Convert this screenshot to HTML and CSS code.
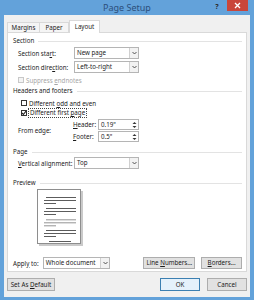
FILE: index.html
```html
<!DOCTYPE html>
<html lang="en">
<head>
  <meta charset="UTF-8" />
  <meta name="viewport" content="width=device-width, initial-scale=1.0"/>
  <title>Page Setup</title>
  <link rel="stylesheet" href="styles.css">
</head>
<body>
  <div class="window">
    <div class="titlebar">
      <span class="title">Page Setup</span>
      <div class="controls">
        <span class="help">?</span>
        <span class="close">
          <svg width="7" height="7" viewBox="0 0 7 7"><path d="M1 1L6 6M6 1L1 6" stroke="#fff" stroke-width="1.3"/></svg>
        </span>
      </div>
    </div>

    <div class="client">
      <div class="tabs">
        <div class="tab">Margins</div>
        <div class="tab">Paper</div>
        <div class="tab active">Layout</div>
      </div>

      <div class="page">
        <div class="group-title">Section</div>
        <div class="row">
          <span class="label">Section sta<u>r</u>t:</span>
          <div class="select">
            <span class="value">New page</span>
            <span class="drop"><svg width="5" height="4" viewBox="0 0 5 4"><path d="M0.5 1L2.5 3L4.5 1" fill="none" stroke="#444" stroke-width="0.9"/></svg></span>
          </div>
        </div>
        <div class="row">
          <span class="label">Section dire<u>c</u>tion:</span>
          <div class="select">
            <span class="value">Left-to-right</span>
            <span class="drop"><svg width="5" height="4" viewBox="0 0 5 4"><path d="M0.5 1L2.5 3L4.5 1" fill="none" stroke="#444" stroke-width="0.9"/></svg></span>
          </div>
        </div>
        <div class="check-row disabled indent">
          <span class="box"></span>
          <span>Suppress <u>e</u>ndnotes</span>
        </div>

        <div class="group-title hf">Headers and footers</div>
        <div class="check-row first">
          <span class="box"></span>
          <span>Different <u>o</u>dd and even</span>
        </div>
        <div class="check-row">
          <span class="box">
            <svg width="6" height="6" viewBox="0 0 6 6"><path d="M1 3L2.4 4.5L5 1.2" fill="none" stroke="#222" stroke-width="1.1"/></svg>
          </span>
          <span class="focus">Different first <u>p</u>age</span>
        </div>
        <div class="edge">
          <span class="label">From edge:</span>
          <div class="edge-fields">
            <div class="field">
              <span class="sublabel"><u>H</u>eader:</span>
              <div class="spin">
                <span class="value">0.19"</span>
                <span class="arrows"><svg width="5" height="8" viewBox="0 0 5 8"><path d="M0.5 3L2.5 1L4.5 3Z M0.5 5L2.5 7L4.5 5Z" fill="#333"/></svg></span>
              </div>
            </div>
            <div class="field">
              <span class="sublabel"><u>F</u>ooter:</span>
              <div class="spin">
                <span class="value">0.5"</span>
                <span class="arrows"><svg width="5" height="8" viewBox="0 0 5 8"><path d="M0.5 3L2.5 1L4.5 3Z M0.5 5L2.5 7L4.5 5Z" fill="#333"/></svg></span>
              </div>
            </div>
          </div>
        </div>

        <div class="group-title pg">Page</div>
        <div class="row tight">
          <span class="label"><u>V</u>ertical alignment:</span>
          <div class="select">
            <span class="value">Top</span>
            <span class="drop"><svg width="5" height="4" viewBox="0 0 5 4"><path d="M0.5 1L2.5 3L4.5 1" fill="none" stroke="#444" stroke-width="0.9"/></svg></span>
          </div>
        </div>

        <div class="group-title pv">Preview</div>
        <div class="preview">
          <div class="sheet">
            <div class="para">
              <div class="ln in"></div><div class="ln"></div><div class="ln short"></div>
            </div>
            <div class="para">
              <div class="ln in"></div><div class="ln"></div><div class="ln short"></div>
            </div>
            <div class="para sel">
              <div class="ln in"></div><div class="ln"></div><div class="ln short"></div>
            </div>
            <div class="para">
              <div class="ln in"></div><div class="ln"></div><div class="ln short"></div>
            </div>
            <div class="ln foot"></div>
          </div>
        </div>

        <div class="apply">
          <span class="apply-label">Appl<u>y</u> to:</span>
          <div class="select wide">
            <span class="value">Whole document</span>
            <span class="drop"><svg width="5" height="4" viewBox="0 0 5 4"><path d="M0.5 1L2.5 3L4.5 1" fill="none" stroke="#444" stroke-width="0.9"/></svg></span>
          </div>
          <button class="btn numbers">Line <u>N</u>umbers...</button>
          <button class="btn borders"><u>B</u>orders...</button>
        </div>
      </div>

      <div class="footer">
        <button class="btn default">Set As <u>D</u>efault</button>
        <button class="btn ok">OK</button>
        <button class="btn cancel">Cancel</button>
      </div>
    </div>
  </div>
</body>
</html>
```

FILE: styles.css
```css
* {
  box-sizing: border-box;
}

body {
  margin: 0;
  width: 254px;
  height: 300px;
  overflow: hidden;
  background: #63a2da;
  font-family: 'Noto Sans', 'Open Sans', sans-serif;
  font-size: 6.2px;
  color: #1b1b1b;
  white-space: nowrap;
}

u {
  text-decoration-thickness: 0.5px;
  text-underline-offset: 1px;
}

.window {
  display: flex;
  flex-direction: column;
  height: 300px;
}

/* title bar */
.titlebar {
  height: 15px;
  display: grid;
  grid-template-columns: 1fr auto 1fr;
  align-items: start;
}

.title {
  grid-column: 2;
  font-size: 9px;
  line-height: 16px;
  color: #2c4f7c;
}

.controls {
  grid-column: 3;
  justify-self: end;
  display: flex;
  margin-right: 6px;
}

.help {
  width: 10px;
  margin-right: 5px;
  font-size: 7px;
  font-weight: bold;
  line-height: 13px;
  text-align: center;
  color: #2a2a2a;
}

.close {
  width: 21px;
  height: 11px;
  background: #c9463a;
  display: flex;
  align-items: center;
  justify-content: center;
}

/* client area */
.client {
  flex: 1;
  margin: 0 4px 3px;
  padding: 5px 3px 0;
  background: #f0f0f0;
  display: flex;
  flex-direction: column;
}

.tabs {
  height: 12px;
  display: flex;
  align-items: flex-end;
}

.tab {
  height: 10px;
  line-height: 9px;
  text-align: center;
  border: 1px solid #d9d9d9;
  border-bottom: none;
  background: #f5f5f5;
  color: #222;
}

.tab:nth-child(1) { width: 33px; }
.tab:nth-child(2) { width: 29px; border-left: none; }

.tab.active {
  width: 31px;
  height: 13px;
  line-height: 12px;
  margin-bottom: -1px;
  background: #fff;
  position: relative;
}

.page {
  height: 240px;
  border: 1px solid #d9d9d9;
  background: #fff;
  padding: 0 4px 0 5px;
}

/* group headers */
.group-title {
  display: flex;
  align-items: center;
  height: 8px;
  line-height: 8px;
  margin-top: 4px;
}

.group-title::after {
  content: "";
  flex: 1;
  height: 1px;
  margin-left: 4px;
  background: #e3e3e3;
}

.group-title.hf { margin-top: 2px; }
.group-title.pg { margin-top: 6px; }
.group-title.pv { margin-top: 10px; }

/* label + select rows */
.row {
  display: flex;
  align-items: center;
  height: 12px;
  margin-top: 2px;
}

.row.tight { margin-top: 1px; }

.label {
  width: 56px;
  margin-left: 5px;
  flex-shrink: 0;
}

.select {
  width: 65px;
  height: 12px;
  border: 1px solid #b5b5b5;
  background: #fff;
  display: flex;
  align-items: stretch;
}

.select .value {
  flex: 1;
  padding-left: 2px;
  line-height: 10px;
}

.drop {
  width: 9px;
  border-left: 1px solid #d0d0d0;
  background: #f2f2f2;
  display: flex;
  align-items: center;
  justify-content: center;
}

.select.wide { width: 68px; }

/* checkboxes */
.check-row {
  display: flex;
  align-items: center;
  height: 10px;
  margin-top: 2px;
  margin-left: 8px;
}

.check-row.first { margin-top: 3px; }
.check-row + .check-row { margin-top: 0; }
.check-row.indent { margin-left: 5px; }

.box {
  width: 6px;
  height: 6px;
  border: 1px solid #333;
  background: #fff;
  margin-right: 2px;
  display: flex;
  align-items: center;
  justify-content: center;
}

.box svg {
  margin: -1px;
}

.check-row.disabled {
  color: #a6a6a6;
}

.check-row.disabled .box {
  border-color: #c8c8c8;
  background: #f4f4f4;
}

.focus {
  outline: 1px dotted #444;
  outline-offset: 0;
  padding: 0 1px;
  line-height: 8px;
}

/* header / footer distances */
.edge {
  display: flex;
  align-items: center;
  margin-top: 1px;
}

.edge .label {
  width: 55px;
}

.edge-fields {
  display: flex;
  flex-direction: column;
  gap: 1px;
}

.field {
  display: flex;
  align-items: center;
  height: 11px;
}

.sublabel {
  width: 25px;
}

.spin {
  width: 41px;
  height: 11px;
  border: 1px solid #b5b5b5;
  background: #fff;
  display: flex;
}

.spin .value {
  flex: 1;
  padding-left: 2px;
  line-height: 9px;
}

.arrows {
  width: 8px;
  display: flex;
  align-items: center;
  justify-content: center;
}

/* preview page */
.preview {
  height: 57px;
  margin-top: 2px;
  padding-left: 24px;
}

.sheet {
  width: 44px;
  height: 55px;
  border: 1px solid #8e8e8e;
  background: #fff;
  box-shadow: 2px 2px 0 #cacaca;
  padding: 7px 4px 0 6px;
}

.para + .para {
  margin-top: 4px;
}

.ln {
  height: 1px;
  background: #5c5c5c;
}

.para .ln + .ln {
  margin-top: 2px;
}

.ln.in { margin-left: 2px; }
.ln.short { width: 12px; }

.para.sel .ln {
  background: #b4b4b4;
  box-shadow: 0 1px 0 #dedede;
}

.ln.foot {
  width: 22px;
  margin: 4px auto 0;
}

/* apply row */
.apply {
  display: flex;
  align-items: center;
  height: 12px;
  margin-top: 11px;
}

.apply-label {
  width: 30px;
}

.btn {
  height: 12px;
  padding: 0;
  border: 1px solid #adadad;
  background: #e1e1e1;
  font-family: inherit;
  font-size: 6.2px;
  line-height: 10px;
  color: #1b1b1b;
}

.numbers {
  width: 52px;
  margin-left: 33px;
}

.borders {
  width: 41px;
  margin-left: 6px;
}

/* dialog buttons */
.footer {
  display: flex;
  align-items: center;
  padding-top: 6px;
}

.footer .btn {
  height: 13px;
  line-height: 11px;
}

.default { width: 48px; }

.ok {
  width: 40px;
  margin-left: auto;
  border-color: #3c7fb1;
  background: #e5f1fb;
}

.cancel {
  width: 40px;
  margin-left: 7px;
}
```
